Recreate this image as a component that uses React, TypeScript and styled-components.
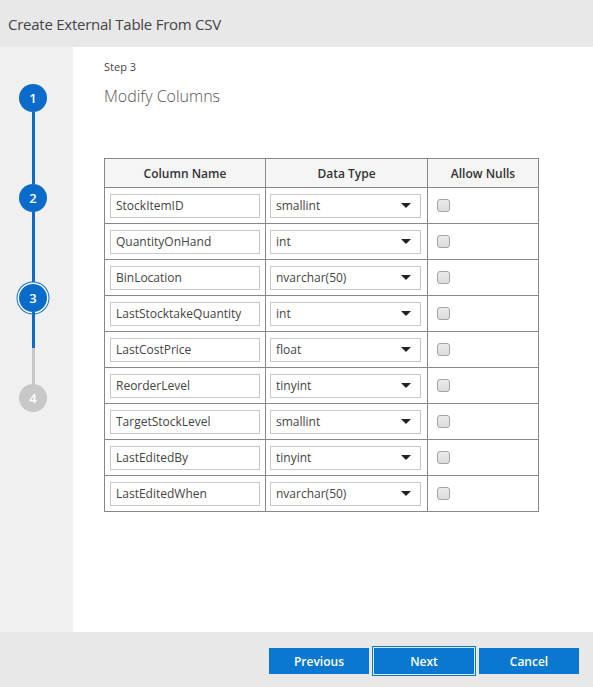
import React, { FC } from "react";
import styled, { createGlobalStyle } from "styled-components";

interface ColumnRow {
  name: string;
  type: string;
}

const columns: ColumnRow[] = [
  { name: "StockItemID", type: "smallint" },
  { name: "QuantityOnHand", type: "int" },
  { name: "BinLocation", type: "nvarchar(50)" },
  { name: "LastStocktakeQuantity", type: "int" },
  { name: "LastCostPrice", type: "float" },
  { name: "ReorderLevel", type: "tinyint" },
  { name: "TargetStockLevel", type: "smallint" },
  { name: "LastEditedBy", type: "tinyint" },
  { name: "LastEditedWhen", type: "nvarchar(50)" },
];

const typeOptions = ["smallint", "int", "tinyint", "float", "nvarchar(50)"];

const steps = [1, 2, 3, 4];
const currentStep = 3;

const App: FC = () => {
  return (
    <>
      <GlobalStyle />
      <Dialog>
        <Header>Create External Table From CSV</Header>
        <Body>
          <Sidebar>
            {steps.map((step, index) => (
              <React.Fragment key={step}>
                <StepCircle
                  $done={step < currentStep}
                  $active={step === currentStep}
                >
                  {step}
                </StepCircle>
                {index < steps.length - 1 && (
                  <Connector
                    $state={
                      step < currentStep
                        ? "done"
                        : step === currentStep
                        ? "half"
                        : "todo"
                    }
                  />
                )}
              </React.Fragment>
            ))}
          </Sidebar>
          <Content>
            <StepLabel>Step 3</StepLabel>
            <Title>Modify Columns</Title>
            <Table>
              <colgroup>
                <col style={{ width: 161 }} />
                <col style={{ width: 162 }} />
                <col style={{ width: 111 }} />
              </colgroup>
              <thead>
                <tr>
                  <Th>Column Name</Th>
                  <Th>Data Type</Th>
                  <Th>Allow Nulls</Th>
                </tr>
              </thead>
              <tbody>
                {columns.map((col) => (
                  <tr key={col.name}>
                    <Td>
                      <TextInput defaultValue={col.name} />
                    </Td>
                    <Td>
                      <SelectWrap>
                        <Select defaultValue={col.type}>
                          {typeOptions.map((opt) => (
                            <option key={opt} value={opt}>
                              {opt}
                            </option>
                          ))}
                        </Select>
                        <Caret width="10" height="5" viewBox="0 0 10 5">
                          <path d="M0 0 L10 0 L5 5 Z" fill="#222" />
                        </Caret>
                      </SelectWrap>
                    </Td>
                    <Td>
                      <Checkbox type="checkbox" />
                    </Td>
                  </tr>
                ))}
              </tbody>
            </Table>
          </Content>
        </Body>
        <Footer>
          <Button>Previous</Button>
          <Button $focused>Next</Button>
          <Button>Cancel</Button>
        </Footer>
      </Dialog>
    </>
  );
};

export default App;

const GlobalStyle = createGlobalStyle`
  html, body {
    margin: 0;
    padding: 0;
    background: #fff;
  }
  body {
    font-family: "Open Sans", "Noto Sans", sans-serif;
  }
`;

const Dialog = styled.div`
  width: 593px;
  height: 687px;
  display: flex;
  flex-direction: column;
`;

const Header = styled.div`
  height: 47px;
  flex-shrink: 0;
  display: flex;
  align-items: center;
  padding-left: 8px;
  background: #e8e8e8;
  color: #444;
  font-size: 15px;
  letter-spacing: -0.25px;
`;

const Body = styled.div`
  flex: 1;
  display: flex;
  min-height: 0;
`;

const Sidebar = styled.div`
  width: 73px;
  flex-shrink: 0;
  background: #f0f0f0;
  display: flex;
  flex-direction: column;
  align-items: center;
  padding: 37px 7px 0 0;
  box-sizing: border-box;
`;

const StepCircle = styled.div<{ $done?: boolean; $active?: boolean }>`
  width: 28px;
  height: 28px;
  border-radius: 50%;
  flex-shrink: 0;
  display: flex;
  align-items: center;
  justify-content: center;
  font-size: 13px;
  font-weight: 600;
  color: #fff;
  background: ${(p) => (p.$done || p.$active ? "#0b6bcb" : "#c8c8c8")};
  box-shadow: ${(p) =>
    p.$active ? "0 0 0 1.5px #fff, 0 0 0 2.5px #0b6bcb" : "none"};
`;

const Connector = styled.div<{ $state: "done" | "half" | "todo" }>`
  width: 3px;
  height: 72px;
  background: ${(p) =>
    p.$state === "done"
      ? "#0b6bcb"
      : p.$state === "half"
      ? "linear-gradient(#0b6bcb 0 50%, #c8c8c8 50% 100%)"
      : "#c8c8c8"};
`;

const Content = styled.div`
  flex: 1;
  background: #fff;
  padding: 12px 0 0 31px;
`;

const StepLabel = styled.div`
  font-size: 11px;
  color: #444;
  line-height: 15px;
`;

const Title = styled.div`
  margin-top: 11px;
  font-size: 16px;
  font-weight: 300;
  color: #555;
  line-height: 22px;
`;

const Table = styled.table`
  margin-top: 51px;
  width: 434px;
  border-collapse: collapse;
  table-layout: fixed;
  border: 1px solid #888;
`;

const Th = styled.th`
  height: 28px;
  padding: 0;
  background: #f5f5f5;
  border: 1px solid #888;
  font-size: 12px;
  font-weight: 600;
  color: #333;
  text-align: center;
`;

const Td = styled.td`
  height: 35px;
  padding: 0 5px;
  border: 1px solid #888;
  vertical-align: middle;
`;

const TextInput = styled.input`
  width: 100%;
  height: 24px;
  box-sizing: border-box;
  border: 1px solid #c8c8c8;
  padding: 0 5px;
  font-family: inherit;
  font-size: 12px;
  color: #444;
  outline: none;
`;

const SelectWrap = styled.div`
  position: relative;
  width: 151px;
  margin-left: -1px;
`;

const Select = styled.select`
  width: 100%;
  height: 24px;
  box-sizing: border-box;
  border: 1px solid #c8c8c8;
  border-radius: 0;
  background: #fff;
  padding: 0 5px;
  font-family: inherit;
  font-size: 12px;
  color: #444;
  appearance: none;
  outline: none;
`;

const Caret = styled.svg`
  position: absolute;
  right: 10px;
  top: 10px;
  pointer-events: none;
`;

const Checkbox = styled.input`
  appearance: none;
  margin: 0 0 0 4px;
  width: 13px;
  height: 13px;
  border: 1px solid #a5a5a5;
  border-radius: 3px;
  background: linear-gradient(#eaeaea, #dcdcdc);
  display: block;
`;

const Footer = styled.div`
  height: 55px;
  flex-shrink: 0;
  background: #e8e8e8;
  display: flex;
  justify-content: flex-end;
  align-items: flex-start;
  gap: 5px;
  padding: 16px 14px 0 0;
  box-sizing: border-box;
`;

const Button = styled.button<{ $focused?: boolean }>`
  width: 100px;
  height: 26px;
  border: none;
  background: #0a78d0;
  color: #fff;
  font-family: inherit;
  font-size: 12px;
  font-weight: 600;
  outline: ${(p) => (p.$focused ? "1px solid #0a78d0" : "none")};
  outline-offset: 1px;
  cursor: pointer;
`;
